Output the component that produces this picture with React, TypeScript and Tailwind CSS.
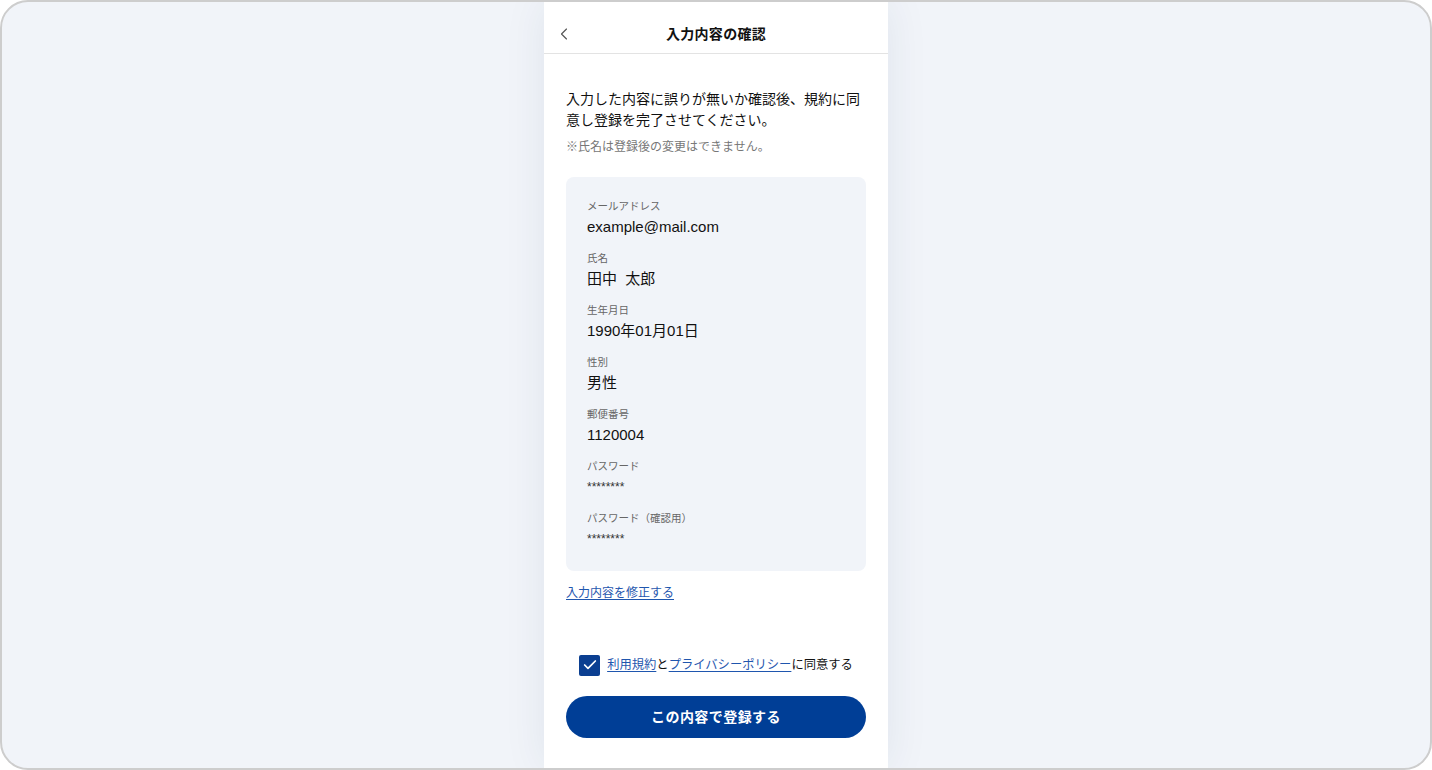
import { Check, ChevronLeft } from "lucide-react";

const FIELDS = [
  { label: "メールアドレス", value: "example@mail.com" },
  { label: "氏名", value: "田中\u00a0 太郎" },
  { label: "生年月日", value: "1990年01月01日" },
  { label: "性別", value: "男性" },
  { label: "郵便番号", value: "1120004" },
  { label: "パスワード", value: "********", small: true },
  { label: "パスワード（確認用）", value: "********", small: true },
];

export default function App() {
  return (
    <div
      className="h-[770px] w-[1432px] overflow-hidden rounded-[28px] border-2 border-[#cdcdcd] bg-[#f1f4f9] text-[#111]"
      style={{ fontFamily: '"Liberation Sans", "Noto Sans CJK JP", sans-serif' }}
    >
      <div className="mx-auto flex h-full w-[344px] flex-col bg-white pt-px shadow-[0_0_40px_rgba(30,50,90,0.08)]">
        <header className="relative flex h-[51px] justify-center border-b border-[#e3e3e3] pt-[21px]">
          <button className="absolute left-[10px] top-[21px] text-[#555]">
            <ChevronLeft className="h-[20px] w-[20px]" strokeWidth={1.4} />
          </button>
          <h1 className="text-[14px] font-bold leading-[20px] tracking-[0.02em]">入力内容の確認</h1>
        </header>

        <main className="px-[22px] pt-[35px]">
          <p className="text-[14px] leading-[21px]">
            入力した内容に誤りが無いか確認後、規約に同意し登録を完了させてください。
          </p>
          <p className="mt-[8px] text-[12px] leading-[16px] text-[#777]">※氏名は登録後の変更はできません。</p>

          <dl className="mt-[22px] rounded-[8px] bg-[#f1f4f9] px-[21px] pb-[21px] pt-[21px]">
            {FIELDS.map((f, i) => (
              <div key={f.label} className={i === FIELDS.length - 1 ? "" : "mb-[12px]"}>
                <dt className="text-[10.5px] leading-[16px] text-[#666]">{f.label}</dt>
                <dd
                  className={`mt-[2px] leading-[22px] ${
                    f.small ? "text-[12px] text-[#333]" : "text-[15px] text-[#111]"
                  }`}
                >
                  {f.value}
                </dd>
              </div>
            ))}
          </dl>

          <a href="#" className="mt-[14px] inline-block text-[12px] leading-[16px] text-[#1f56ae] underline underline-offset-2">
            入力内容を修正する
          </a>

          <label className="mt-[50px] flex items-center justify-center gap-[7px] text-[12.3px] leading-[22px]">
            <span className="flex h-[21px] w-[21px] items-center justify-center rounded-[2px] bg-[#0b3f91] text-white">
              <Check className="h-[16px] w-[16px]" strokeWidth={2.6} />
            </span>
            <span>
              <a href="#" className="text-[#1f56ae] underline underline-offset-2">利用規約</a>
              と
              <a href="#" className="text-[#1f56ae] underline underline-offset-2">プライバシーポリシー</a>
              に同意する
            </span>
          </label>

          <button className="mt-[20px] flex h-[42px] w-full items-center justify-center rounded-full bg-[#003e96] text-[14px] font-bold tracking-[0.03em] text-white">
            この内容で登録する
          </button>
        </main>
      </div>
    </div>
  );
}
